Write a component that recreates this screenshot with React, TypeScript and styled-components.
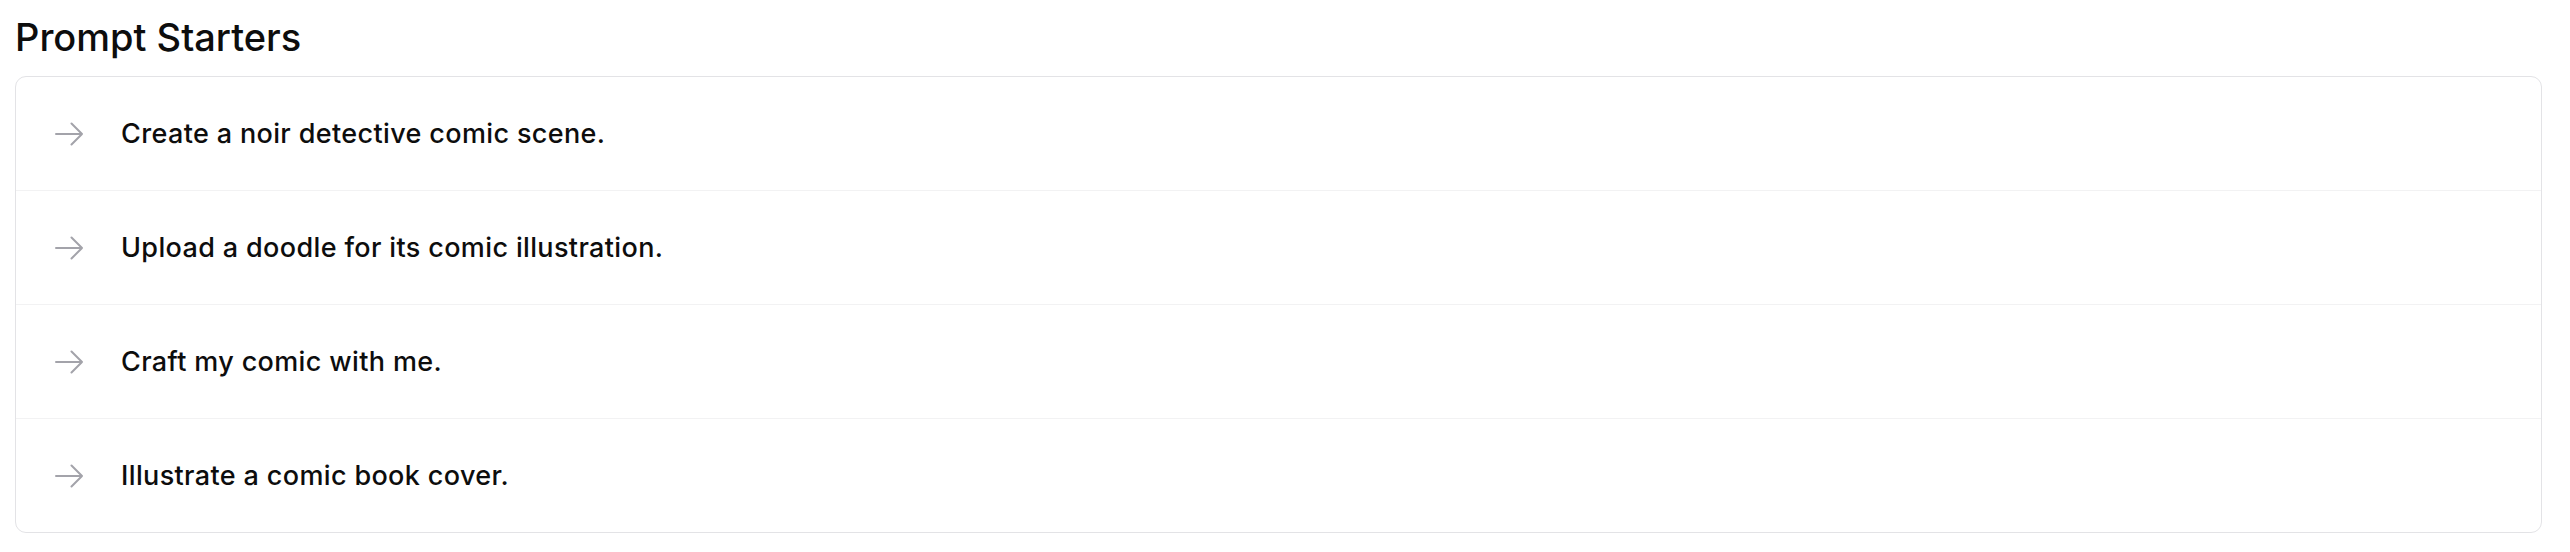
import React from "react";
import styled, { createGlobalStyle } from "styled-components";

const Global = createGlobalStyle`
  html, body { margin: 0; padding: 0; background: #ffffff; }
  body { font-family: Inter, "Noto Sans", sans-serif; color: #0d0d0d; }
`;

const Page = styled.div`
  padding: 12px 28px 0 15px;
`;

const Title = styled.h2`
  margin: 0 0 14px 0;
  font-size: 38px;
  line-height: 50px;
  font-weight: 500;
  letter-spacing: 0;
  color: #0d0d0d;
`;

const Card = styled.ul`
  list-style: none;
  margin: 0;
  padding: 0;
  border: 1px solid #e3e3e6;
  border-radius: 11px;
  overflow: hidden;
  background: #fff;
`;

const Row = styled.li`
  display: flex;
  align-items: center;
  gap: 38px;
  height: 113px;
  padding-left: 39px;
  & + & {
    border-top: 1px solid #f2f2f3;
  }
`;

const Label = styled.span`
  font-size: 27px;
  font-weight: 500;
  letter-spacing: 0.36px;
  color: #0d0d0d;
`;

const Arrow = () => (
  <svg width="28" height="24" viewBox="0 0 28 24" fill="none">
    <path
      d="M1 12H27M16.5 1.5L27 12L16.5 22.5"
      stroke="#a3a3aa"
      strokeWidth="2"
      strokeLinecap="round"
      strokeLinejoin="round"
    />
  </svg>
);

const items = [
  "Create a noir detective comic scene.",
  "Upload a doodle for its comic illustration.",
  "Craft my comic with me.",
  "Illustrate a comic book cover.",
];

export default function App() {
  return (
    <>
      <Global />
      <Page>
        <Title>Prompt Starters</Title>
        <Card>
          {items.map((t) => (
            <Row key={t}>
              <Arrow />
              <Label>{t}</Label>
            </Row>
          ))}
        </Card>
      </Page>
    </>
  );
}
